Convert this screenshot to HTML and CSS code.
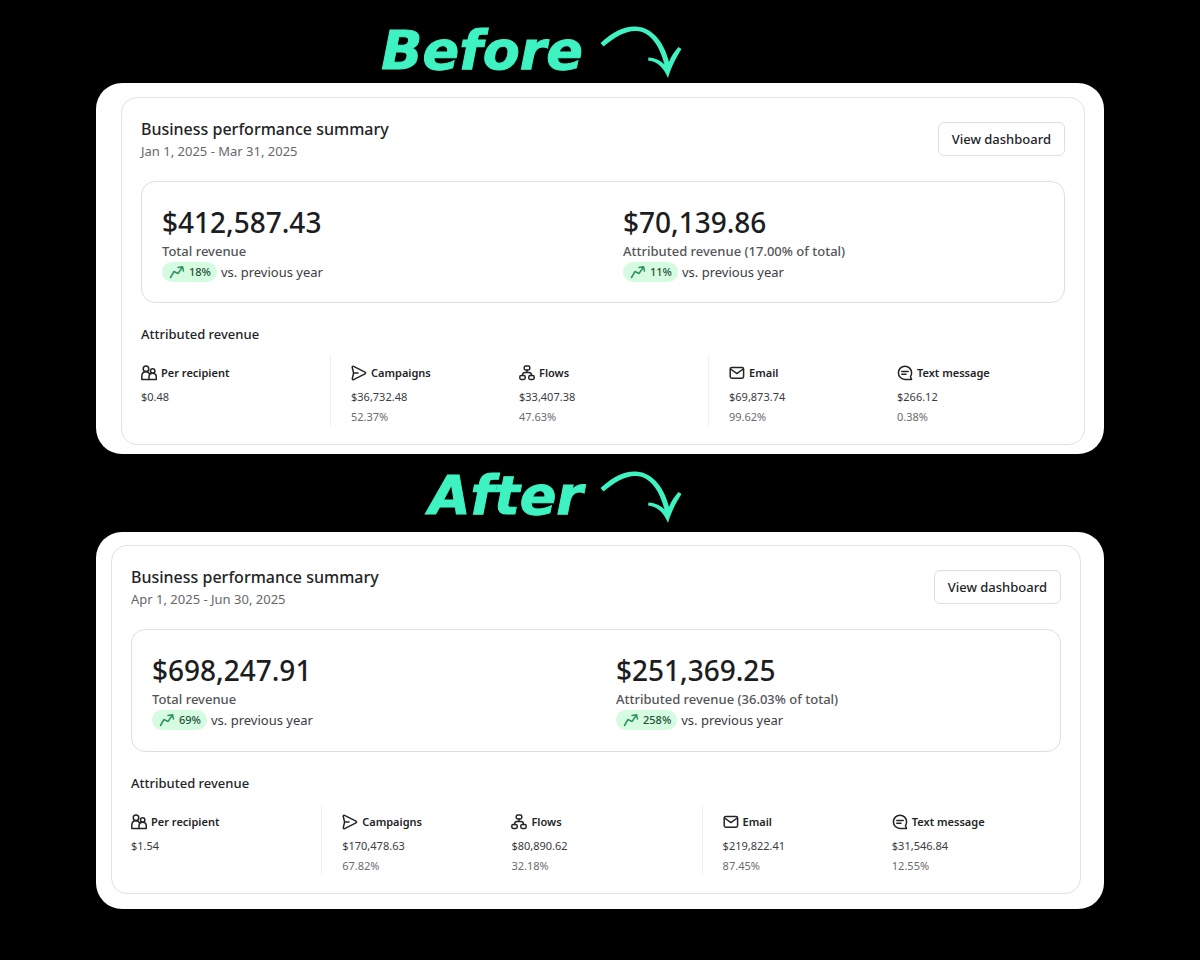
FILE: index.html
```html
<!DOCTYPE html>
<html lang="en">
<head>
<meta charset="utf-8">
<meta name="viewport" content="width=device-width, initial-scale=1">
<title>Business performance: before and after</title>
<link rel="stylesheet" href="styles.css">
</head>
<body>
<svg class="sprite" aria-hidden="true">
  <symbol id="arrow" viewBox="0 0 84 54">
    <path fill="currentColor" d="M0.500 18 C14 6 24 1 36 1.500 C54 2.500 65 20 69 37 C71 31 75 26 78.500 22 L81.500 24 C76 33 71.500 41 68 53 C63.500 42 57 36.500 48 35.500 L48.500 32.500 C56 33 60.500 35.500 64.500 39.500 C60 22 51 6.500 36 6 C26 5.500 15 12 3.500 21.500 Z"/>
  </symbol>
  <symbol id="trend" viewBox="0 0 16 14">
    <path d="M1.500 12.500 L5 6.500 L9 8.500 L13.500 2 M9 2.500 L13.600 1.800 L14.500 6"/>
  </symbol>
  <symbol id="people" viewBox="0 0 16 16">
    <circle cx="5" cy="3.800" r="2.800"/>
    <path d="M8 14.400 H.8 V11.500 C.8 8.300 2.600 6.800 5 6.800 C6.600 6.800 7.800 7.500 8.500 8.800"/>
    <circle cx="11.700" cy="6" r="2.200"/>
    <path d="M8 14.400 V12 C8 9.500 9.500 8.300 11.700 8.300 C13.900 8.300 15.300 9.500 15.300 12 V14.400 Z"/>
  </symbol>
  <symbol id="send" viewBox="0 0 16 16">
    <path d="M1.200 2.200 C1.200 1.400 1.900 1 2.600 1.400 L14 7.200 C14.800 7.700 14.800 8.400 14 8.800 L2.600 14.600 C1.900 15 1.200 14.500 1.300 13.700 L2.600 8 Z M2.600 8 H7"/>
  </symbol>
  <symbol id="flow" viewBox="0 0 16 16">
    <rect x="5.200" y="1" width="5.600" height="4" rx="1.400"/>
    <rect x=".8" y="10.500" width="5.400" height="4" rx="1.400"/>
    <rect x="9.800" y="10.500" width="5.400" height="4" rx="1.400"/>
    <path d="M8 5 V7.600 M3.500 10.500 C3.500 8.600 4.500 7.600 6 7.600 H10 C11.500 7.600 12.500 8.600 12.500 10.500"/>
  </symbol>
  <symbol id="mail" viewBox="0 0 16 16">
    <rect x="1.200" y="2.400" width="13.400" height="10.800" rx="1.600"/>
    <path d="M1.600 4 L7.900 8.600 L14.200 4"/>
  </symbol>
  <symbol id="chat" viewBox="0 0 16 16">
    <path d="M14.600 14.400 H8 A6.600 6.600 0 1 1 14.600 7.800 C14.600 9.200 14.200 10.600 13.400 11.800 Z M4.800 6.500 H11.200 M4.800 9.300 H9"/>
  </symbol>
</svg>

<main class="page">
  <section class="period period-before">
    <h1 class="period-title"><span>Before</span><svg class="arrow" aria-hidden="true"><use href="#arrow"/></svg></h1>
    <div class="panel">
      <article class="card">
        <header class="card-header">
          <div>
            <h2 class="card-title">Business performance summary</h2>
            <p class="card-dates">Jan 1, 2025 - Mar 31, 2025</p>
          </div>
          <button class="button" type="button">View dashboard</button>
        </header>
        <div class="stats">
          <div>
            <p class="stat-value">$412,587.43</p>
            <p class="stat-label">Total revenue</p>
            <p class="stat-change"><span class="badge"><svg aria-hidden="true"><use href="#trend"/></svg>18%</span>vs. previous year</p>
          </div>
          <div>
            <p class="stat-value">$70,139.86</p>
            <p class="stat-label">Attributed revenue (17.00% of total)</p>
            <p class="stat-change"><span class="badge"><svg aria-hidden="true"><use href="#trend"/></svg>11%</span>vs. previous year</p>
          </div>
        </div>
        <h3 class="breakdown-title">Attributed revenue</h3>
        <div class="breakdown">
          <div class="group">
            <div class="metric"><h4><svg aria-hidden="true"><use href="#people"/></svg>Per recipient</h4><p>$0.48</p></div>
          </div>
          <div class="group group-pair">
            <div class="metric"><h4><svg aria-hidden="true"><use href="#send"/></svg>Campaigns</h4><p>$36,732.48</p><p class="share">52.37%</p></div>
            <div class="metric"><h4><svg aria-hidden="true"><use href="#flow"/></svg>Flows</h4><p>$33,407.38</p><p class="share">47.63%</p></div>
          </div>
          <div class="group group-pair">
            <div class="metric"><h4><svg aria-hidden="true"><use href="#mail"/></svg>Email</h4><p>$69,873.74</p><p class="share">99.62%</p></div>
            <div class="metric"><h4><svg aria-hidden="true"><use href="#chat"/></svg>Text message</h4><p>$266.12</p><p class="share">0.38%</p></div>
          </div>
        </div>
      </article>
    </div>
  </section>

  <section class="period period-after">
    <h1 class="period-title"><span>After</span><svg class="arrow" aria-hidden="true"><use href="#arrow"/></svg></h1>
    <div class="panel">
      <article class="card">
        <header class="card-header">
          <div>
            <h2 class="card-title">Business performance summary</h2>
            <p class="card-dates">Apr 1, 2025 - Jun 30, 2025</p>
          </div>
          <button class="button" type="button">View dashboard</button>
        </header>
        <div class="stats">
          <div>
            <p class="stat-value">$698,247.91</p>
            <p class="stat-label">Total revenue</p>
            <p class="stat-change"><span class="badge"><svg aria-hidden="true"><use href="#trend"/></svg>69%</span>vs. previous year</p>
          </div>
          <div>
            <p class="stat-value">$251,369.25</p>
            <p class="stat-label">Attributed revenue (36.03% of total)</p>
            <p class="stat-change"><span class="badge"><svg aria-hidden="true"><use href="#trend"/></svg>258%</span>vs. previous year</p>
          </div>
        </div>
        <h3 class="breakdown-title">Attributed revenue</h3>
        <div class="breakdown">
          <div class="group">
            <div class="metric"><h4><svg aria-hidden="true"><use href="#people"/></svg>Per recipient</h4><p>$1.54</p></div>
          </div>
          <div class="group group-pair">
            <div class="metric"><h4><svg aria-hidden="true"><use href="#send"/></svg>Campaigns</h4><p>$170,478.63</p><p class="share">67.82%</p></div>
            <div class="metric"><h4><svg aria-hidden="true"><use href="#flow"/></svg>Flows</h4><p>$80,890.62</p><p class="share">32.18%</p></div>
          </div>
          <div class="group group-pair">
            <div class="metric"><h4><svg aria-hidden="true"><use href="#mail"/></svg>Email</h4><p>$219,822.41</p><p class="share">87.45%</p></div>
            <div class="metric"><h4><svg aria-hidden="true"><use href="#chat"/></svg>Text message</h4><p>$31,546.84</p><p class="share">12.55%</p></div>
          </div>
        </div>
      </article>
    </div>
  </section>
</main>
</body>
</html>
```
FILE: styles.css
```css
* { box-sizing: border-box; }

body {
  margin: 0;
  background: #000;
  color: #232426;
  font-family: "Noto Sans", "Open Sans", sans-serif;
}

h1, h2, h3, h4, p { margin: 0; }

.sprite { position: absolute; width: 0; height: 0; }

.page { padding: 0 8%; }

.period-title {
  display: grid;
  grid-template-columns: 1fr 1fr;
  column-gap: 17px;
  align-items: end;
  padding-right: 17px;
  color: #3ef3c1;
  font: italic 700 54px/56px "DejaVu Sans", sans-serif;
  -webkit-text-stroke: 1px #3ef3c1;
}

.period-title span { text-align: right; }

.arrow { width: 84px; height: 54px; }

.period-before .period-title { height: 83px; padding-bottom: 4px; }
.period-after .period-title { height: 78px; padding-bottom: 8px; }

.panel {
  padding: 14px 19px 9px 25px;
  border-radius: 26px;
  background: #fff;
}

.period-after .panel { padding: 13px 23px 15px 15px; }

.card {
  padding: 19px 19px 18px;
  border: 1px solid #e1e2e4;
  border-radius: 16px;
}

.card-header {
  display: flex;
  justify-content: space-between;
  align-items: center;
  margin-bottom: 20px;
}

.card-title { font-size: 16px; font-weight: 500; line-height: 24px; }

.card-dates { color: #66686b; font-size: 13px; line-height: 20px; }

.button {
  height: 34px;
  padding: 0 13px;
  border: 1px solid #dcdee0;
  border-radius: 6px;
  background: #fff;
  color: inherit;
  font: 500 13px/20px "Noto Sans", "Open Sans", sans-serif;
}

.stats {
  display: grid;
  grid-template-columns: 1fr 1fr;
  column-gap: 40px;
  padding: 20px;
  border: 1px solid #dedfe1;
  border-radius: 14px;
}

.period-after .stats { padding-bottom: 21px; }

.stat-value { color: #1c1d1f; font-size: 28px; font-weight: 500; line-height: 40px; }

.stat-label { color: #535558; font-size: 13px; font-weight: 500; line-height: 18px; }

.stat-change {
  display: flex;
  align-items: center;
  gap: 4px;
  margin-top: 2px;
  color: #3a3c3f;
  font-size: 13px;
  line-height: 20px;
}

.badge {
  display: flex;
  align-items: center;
  gap: 4px;
  padding: 0 6px 0 7px;
  border-radius: 10px;
  background: #d5fbe0;
  color: #24523a;
  font-size: 11px;
  font-weight: 500;
}

svg { fill: none; stroke: currentColor; stroke-width: 1.5; stroke-linecap: round; stroke-linejoin: round; }

.arrow { stroke: none; }

.badge svg { width: 16px; height: 14px; color: #2f9361; }

.breakdown-title { margin: 21px 0 12px; font-size: 13px; font-weight: 500; line-height: 20px; }

.breakdown { display: flex; gap: 21px; }

.group { display: flex; flex: 1 1 0; padding-top: 7px; }

.group-pair { flex-grow: 2; padding-left: 20px; border-left: 1px solid #eeeff0; }

.metric { flex: 1 1 0; min-width: 0; color: #3a3c3f; font-size: 11px; line-height: 18px; }

.metric h4 {
  display: flex;
  align-items: center;
  gap: 4px;
  margin-bottom: 5px;
  color: #232426;
  font-size: 11px;
  font-weight: 600;
  line-height: 20px;
  white-space: nowrap;
}

.metric h4 svg { width: 16px; height: 16px; }

.metric .share { margin-top: 2px; color: #6a6c6f; }
```
